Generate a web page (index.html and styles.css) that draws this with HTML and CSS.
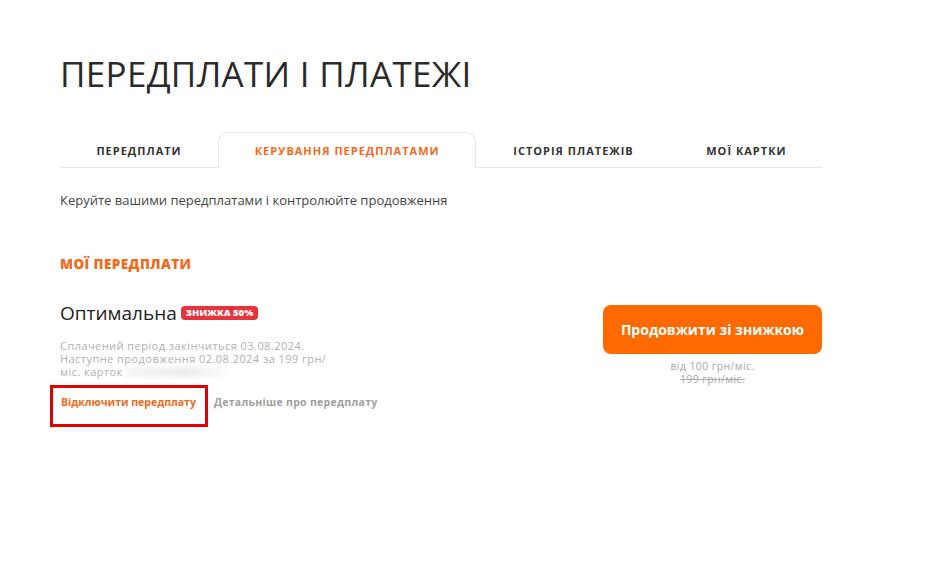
FILE: index.html
```html
<!DOCTYPE html>
<html lang="uk">
<head>
  <meta charset="UTF-8" />
  <meta name="viewport" content="width=device-width, initial-scale=1.0"/>
  <title>Передплати і платежі</title>
  <link rel="stylesheet" href="styles.css">
</head>
<body>
  <main class="page">
    <h1 class="title">ПЕРЕДПЛАТИ І ПЛАТЕЖІ</h1>

    <nav class="tabs">
      <a class="tab">ПЕРЕДПЛАТИ</a>
      <a class="tab active">КЕРУВАННЯ ПЕРЕДПЛАТАМИ</a>
      <a class="tab">ІСТОРІЯ ПЛАТЕЖІВ</a>
      <a class="tab">МОЇ КАРТКИ</a>
    </nav>

    <p class="intro">Керуйте вашими передплатами і контролюйте продовження</p>

    <h2 class="section-title">МОЇ ПЕРЕДПЛАТИ</h2>

    <div class="sub">
      <div class="sub-info">
        <div class="sub-name">Оптимальна <span class="badge">ЗНИЖКА 50%</span></div>
        <div class="sub-details">
          Сплачений період закінчиться 03.08.2024.<br>
          Наступне продовження 02.08.2024 за 199 грн/<br>
          міс. карток <span class="blurred"></span>
        </div>
        <div class="sub-links">
          <a class="link-cancel">Відключити передплату</a>
          <a class="link-more">Детальніше про передплату</a>
        </div>
      </div>
      <div class="sub-action">
        <a class="btn">Продовжити зі знижкою</a>
        <div class="price">від 100 грн/міс.</div>
        <div class="price old">199 грн/міс.</div>
      </div>
    </div>
  </main>
</body>
</html>
```

FILE: styles.css
```css
  body {
    margin: 0;
    background: #fff;
    color: #222;
    font-family: "Open Sans", Arial, sans-serif;
  }
  .page {
    width: 762px;
    padding: 50px 0 0 60px;
  }
  .title {
    margin: 0;
    font-size: 35px;
    font-weight: 400;
    line-height: 48px;
    color: #2a2a2a;
    letter-spacing: 0.3px;
  }
  .tabs {
    display: flex;
    margin-top: 34px;
    border-bottom: 1px solid #e6e6e6;
  }
  .tab {
    display: block;
    padding: 0 33px;
    height: 34px;
    line-height: 36px;
    font-size: 11px;
    font-weight: 700;
    letter-spacing: 1px;
    color: #333;
    text-align: center;
    white-space: nowrap;
    border: 1px solid transparent;
    border-bottom: none;
  }
  .tab:first-child { width: 91px; }
  .tab:nth-child(2) { width: 192px; }
  .tab:nth-child(3) { width: 128px; }
  .tab:nth-child(4) { width: 84px; }
  .tab.active {
    color: #f26a1b;
    border-color: #e6e6e6;
    border-radius: 10px 10px 0 0;
    background: #fff;
    margin-bottom: -1px;
    height: 35px;
  }
  .intro {
    margin: 23px 0 0 0;
    font-size: 13px;
    color: #444;
  }
  .section-title {
    margin: 46px 0 0 0;
    font-size: 13.5px;
    font-weight: 800;
    color: #f26a1b;
    letter-spacing: 0.4px;
  }
  .sub {
    display: flex;
    justify-content: space-between;
    margin-top: 27px;
  }
  .sub-name {
    font-size: 19px;
    line-height: 26px;
    color: #222;
  }
  .badge {
    display: inline-block;
    vertical-align: 4px;
    background: #e8323c;
    color: #fff;
    font-size: 9.5px;
    font-weight: 800;
    line-height: 14px;
    padding: 0 5px;
    border-radius: 4px;
    margin-left: -1px;
  }
  .sub-details {
    margin-top: 13px;
    font-size: 11px;
    line-height: 13px;
    letter-spacing: 0.45px;
    color: #b0b0b0;
  }
  .blurred {
    display: inline-block;
    width: 100px;
    height: 10px;
    vertical-align: -1px;
    background: linear-gradient(90deg, #f4f4f4, #ececec 60%, #fafafa);
    filter: blur(2px);
  }
  .sub-links {
    display: flex;
    align-items: flex-start;
    margin-top: 7px;
    margin-left: -10px;
    font-size: 10.5px;
    font-weight: 700;
    line-height: 15px;
  }
  .link-cancel {
    color: #f26a1b;
    border: 3px solid #e00000;
    padding: 7px 9px 14px 8px;
  }
  .link-more {
    color: #a0a0a0;
    margin-left: 6px;
    padding-top: 10px;
    letter-spacing: 0.3px;
  }
  .sub-action {
    display: flex;
    flex-direction: column;
    align-items: center;
    width: 219px;
    margin-top: 5px;
  }
  .btn {
    display: block;
    width: 219px;
    height: 49px;
    line-height: 49px;
    text-align: center;
    background: #ff6a00;
    color: #fff;
    border-radius: 8px;
    font-size: 14px;
    font-weight: 700;
  }
  .price {
    font-size: 10.5px;
    line-height: 13px;
    color: #a8a8a8;
    letter-spacing: 0.4px;
  }
  .price:nth-of-type(1) {
    margin-top: 6px;
  }
  .price.old {
    text-decoration: line-through;
  }
```
